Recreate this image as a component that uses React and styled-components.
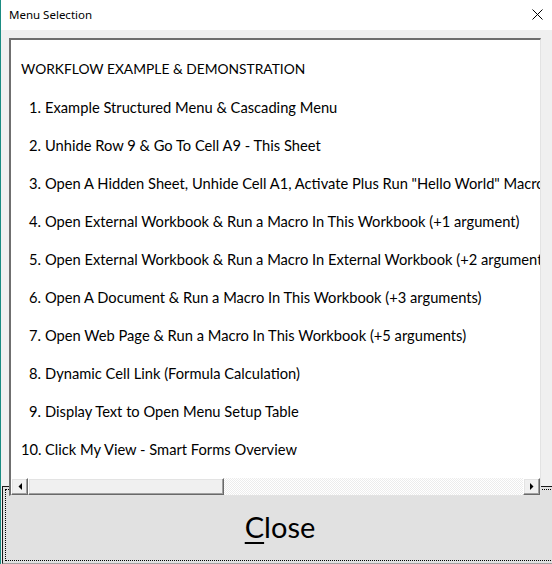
import React from "react";
import styled, { createGlobalStyle } from "styled-components";

const Global = createGlobalStyle`
  html, body { margin: 0; padding: 0; background: #f0f0f0; overflow: hidden; }
  #root { width: 552px; height: 564px; }
`;

const Window = styled.div`
  width: 552px;
  height: 564px;
  box-sizing: border-box;
  border-left: 1px solid #1b8c82;
  background: #f0f0f0;
  display: flex;
  flex-direction: column;
  overflow: hidden;
`;

const TitleBar = styled.div`
  height: 30px;
  flex: none;
  background: #ffffff;
  display: flex;
  align-items: center;
  justify-content: space-between;
  padding: 0 9px 2px 8px;
  box-sizing: border-box;
`;

const Title = styled.span`
  font-family: "Noto Sans", sans-serif;
  font-size: 11.5px;
  color: #000;
`;

const CloseX = styled.svg`
  width: 11px;
  height: 11px;
  display: block;
`;

const Body = styled.div`
  flex: 1;
  display: flex;
  flex-direction: column;
`;

const ListArea = styled.div`
  padding: 8px 11px 0 8px;
  position: relative;
  z-index: 1;
  margin-bottom: -10px;
`;

const ListBox = styled.div`
  height: 458px;
  box-sizing: border-box;
  background: #ffffff;
  border-top: 2px solid #6f6f6f;
  border-left: 2px solid #6f6f6f;
  border-right: 1px solid #e3e3e3;
  border-bottom: 1px solid #e3e3e3;
  display: flex;
  flex-direction: column;
  overflow: hidden;
`;

const Rows = styled.div`
  flex: 1;
  padding: 10px 0 0 10px;
  overflow: hidden;
`;

const Row = styled.div`
  height: 38px;
  line-height: 38px;
  white-space: nowrap;
  font-family: Lato, sans-serif;
  font-size: ${(p) => (p.$heading ? "13.8px" : "14.7px")};
  color: #000;
  display: flex;
`;

const Num = styled.span`
  width: 20px;
  text-align: right;
  margin-right: 4px;
  flex: none;
`;

const HScroll = styled.div`
  height: 17px;
  flex: none;
  display: flex;
  background: repeating-conic-gradient(#ececec 0 25%, #ffffff 0 50%) 0 0 / 2px 2px;
`;

const ScrollBtn = styled.div`
  width: 17px;
  height: 17px;
  box-sizing: border-box;
  background: #f0f0f0;
  border-top: 1px solid #ffffff;
  border-left: 1px solid #ffffff;
  border-right: 1px solid #696969;
  border-bottom: 1px solid #696969;
  box-shadow: inset -1px -1px 0 #a0a0a0, inset 1px 1px 0 #e3e3e3;
  display: flex;
  align-items: center;
  justify-content: center;
  flex: none;
`;

const Thumb = styled(ScrollBtn)`
  width: 196px;
`;

const Track = styled.div`
  flex: 1;
`;

const ButtonRow = styled.div`
  padding-left: 1px;
  flex: 1;
  display: flex;
`;

const CloseButton = styled.button`
  flex: none;
  width: 560px;
  height: 78px;
  margin: 0;
  box-sizing: border-box;
  background: #e1e1e1;
  border: 1px solid #1a1a1a;
  border-bottom-color: #a0a0a0;
  outline: 1px dotted #000;
  outline-offset: -4px;
  font-family: Lato, sans-serif;
  font-size: 29px;
  color: #000;
  display: flex;
  align-items: flex-end;
  justify-content: center;
  padding: 0 4px 19px 0;
  cursor: default;
`;

const Mnemonic = styled.span`
  text-decoration: underline;
  text-decoration-thickness: 2px;
  text-underline-offset: 4px;
`;

const Arrow = ({ dir }) => (
  <svg width="4" height="7" viewBox="0 0 4 7" style={{ display: "block" }}>
    {dir === "left" ? (
      <polygon points="4,0 4,7 0.5,3.5" fill="#000" />
    ) : (
      <polygon points="0,0 0,7 3.5,3.5" fill="#000" />
    )}
  </svg>
);

const items = [
  "Example Structured Menu & Cascading Menu",
  "Unhide Row 9 & Go To Cell A9 - This Sheet",
  'Open A Hidden Sheet, Unhide Cell A1, Activate Plus Run "Hello World" Macro',
  "Open External Workbook & Run a Macro In This Workbook (+1 argument)",
  "Open External Workbook & Run a Macro In External Workbook (+2 arguments)",
  "Open A Document & Run a Macro In This Workbook (+3 arguments)",
  "Open Web Page & Run a Macro In This Workbook (+5 arguments)",
  "Dynamic Cell Link (Formula Calculation)",
  "Display Text to Open Menu Setup Table",
  "Click My View - Smart Forms Overview",
];

export default function App() {
  return (
    <>
      <Global />
      <Window>
        <TitleBar>
          <Title>Menu Selection</Title>
          <CloseX viewBox="0 0 11 11">
            <path d="M0.5 0.5 L10.5 10.5 M10.5 0.5 L0.5 10.5" stroke="#000" strokeWidth="1" fill="none" />
          </CloseX>
        </TitleBar>
        <Body>
          <ListArea>
            <ListBox>
              <Rows>
                <Row $heading>WORKFLOW EXAMPLE &amp; DEMONSTRATION</Row>
                {items.map((t, i) => (
                  <Row key={i}>
                    <Num>{i + 1}.</Num>
                    {t}
                  </Row>
                ))}
              </Rows>
              <HScroll>
                <ScrollBtn>
                  <Arrow dir="left" />
                </ScrollBtn>
                <Thumb />
                <Track />
                <ScrollBtn>
                  <Arrow dir="right" />
                </ScrollBtn>
              </HScroll>
            </ListBox>
          </ListArea>
          <ButtonRow>
            <CloseButton>
              <span>
                <Mnemonic>C</Mnemonic>lose
              </span>
            </CloseButton>
          </ButtonRow>
        </Body>
      </Window>
    </>
  );
}
